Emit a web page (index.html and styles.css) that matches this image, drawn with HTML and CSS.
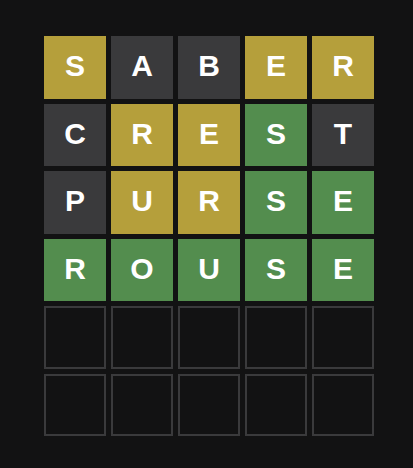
FILE: index.html
```html
<!DOCTYPE html>
<html>
<head>
<meta charset="utf-8">
<link rel="stylesheet" href="styles.css">
</head>
<body>
<div class="board">
  <div class="row">
    <div class="tile present">S</div><div class="tile absent">A</div><div class="tile absent">B</div><div class="tile present">E</div><div class="tile present">R</div>
  </div>
  <div class="row">
    <div class="tile absent">C</div><div class="tile present">R</div><div class="tile present">E</div><div class="tile correct">S</div><div class="tile absent">T</div>
  </div>
  <div class="row">
    <div class="tile absent">P</div><div class="tile present">U</div><div class="tile present">R</div><div class="tile correct">S</div><div class="tile correct">E</div>
  </div>
  <div class="row">
    <div class="tile correct">R</div><div class="tile correct">O</div><div class="tile correct">U</div><div class="tile correct">S</div><div class="tile correct">E</div>
  </div>
  <div class="row">
    <div class="tile empty"></div><div class="tile empty"></div><div class="tile empty"></div><div class="tile empty"></div><div class="tile empty"></div>
  </div>
  <div class="row">
    <div class="tile empty"></div><div class="tile empty"></div><div class="tile empty"></div><div class="tile empty"></div><div class="tile empty"></div>
  </div>
</div>
</body>
</html>
```

FILE: styles.css
```css
html, body {
  margin: 0;
  padding: 0;
  background: #121213;
  height: 100%;
}
body {
  overflow: hidden;
}
.board {
  box-sizing: border-box;
  width: 350px;
  height: 420px;
  margin: 26px 0 0 34px;
  padding: 10px;
  display: grid;
  grid-template-rows: repeat(6, 1fr);
  gap: 5px;
}
.row {
  display: grid;
  grid-template-columns: repeat(5, 1fr);
  gap: 5px;
}
.tile {
  box-sizing: border-box;
  display: flex;
  align-items: center;
  justify-content: center;
  color: #ffffff;
  font-family: "Liberation Sans", Arial, sans-serif;
  font-weight: bold;
  font-size: 30px;
  line-height: 1;
  padding-bottom: 2px;
  text-transform: uppercase;
}
.present { background: #b59f3b; }
.absent { background: #3a3a3c; }
.correct { background: #538d4e; }
.empty { border: 2px solid #3a3a3c; }
```
